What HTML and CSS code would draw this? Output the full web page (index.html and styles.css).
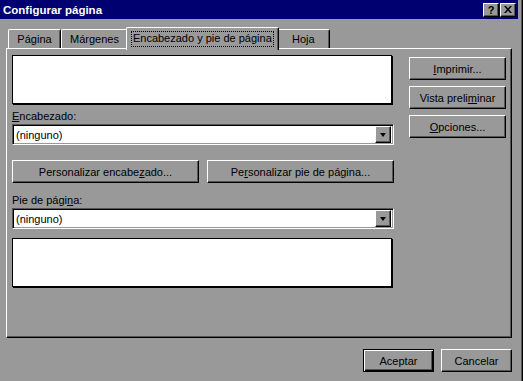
FILE: index.html
```html
<!DOCTYPE html>
<html lang="es">

<head>
    <meta charset="UTF-8">
    <title>Configurar página</title>
    <link rel="stylesheet" href="styles.css">
</head>

<body>
    <div class="window">
        <div class="titlebar">
            <span class="title">Configurar página</span>
            <div class="title-buttons">
                <span class="tbtn help">?</span>
                <span class="tbtn">
                    <svg width="8" height="7" viewBox="0 0 8 7">
                        <path d="M0 0h2l2 2.5l2-2.5h2l-3 3.5l3 3.5h-2l-2-2.5l-2 2.5h-2l3-3.5z" fill="#000"/>
                    </svg>
                </span>
            </div>
        </div>

        <div class="content">
            <div class="tabs">
                <div class="tab">Página</div>
                <div class="tab">Márgenes</div>
                <div class="tab active"><span class="focus">Encabezado y pie de página</span></div>
                <div class="tab">Hoja</div>
            </div>

            <div class="panel">
                <div class="left">
                    <div class="preview"></div>

                    <label class="field-label"><u>E</u>ncabezado:</label>
                    <div class="combo">
                        <span>(ninguno)</span>
                        <span class="drop"><span class="arrow"></span></span>
                    </div>

                    <div class="custom-row">
                        <button class="btn">Personalizar encabe<u>z</u>ado...</button>
                        <button class="btn">Pe<u>r</u>sonalizar pie de página...</button>
                    </div>

                    <label class="field-label footer-label">Pie de pági<u>n</u>a:</label>
                    <div class="combo">
                        <span>(ninguno)</span>
                        <span class="drop"><span class="arrow"></span></span>
                    </div>

                    <div class="preview footer-preview"></div>
                </div>

                <div class="right">
                    <button class="btn"><u>I</u>mprimir...</button>
                    <button class="btn">Vista preli<u>m</u>inar</button>
                    <button class="btn"><u>O</u>pciones...</button>
                </div>
            </div>

            <div class="actions">
                <button class="btn default">Aceptar</button>
                <button class="btn">Cancelar</button>
            </div>
        </div>
    </div>
</body>

</html>
```

FILE: styles.css
```css
body {
    margin: 0;
    font-family: "Liberation Sans", Arial, sans-serif;
    font-size: 11px;
    color: #000;
}

.window {
    width: 523px;
    height: 381px;
    background-color: #999;
    box-shadow: inset -1px 0 #000, inset -2px 0 #555;
    overflow: hidden;
}

/* title bar */
.titlebar {
    height: 19px;
    margin-right: 5px;
    padding: 0 2px 0 3px;
    background-color: #000070;
    display: flex;
    align-items: center;
    justify-content: space-between;
}

.title {
    color: #fff;
    font-weight: bold;
    font-size: 11.5px;
}

.title-buttons {
    display: flex;
    gap: 1px;
}

.tbtn {
    width: 16px;
    height: 14px;
    box-sizing: border-box;
    background-color: #999;
    border: 1px solid;
    border-color: #fff #000 #000 #fff;
    box-shadow: inset -1px -1px #555;
    display: flex;
    align-items: center;
    justify-content: center;
}

.help {
    font-weight: bold;
    font-size: 11px;
    line-height: 12px;
}

/* tabs */
.content {
    padding-left: 6px;
}

.tabs {
    display: flex;
    align-items: flex-end;
    height: 21px;
    margin-top: 8px;
    padding-left: 2px;
    position: relative;
    z-index: 1;
}

.tab {
    height: 19px;
    box-sizing: border-box;
    min-width: 53px;
    padding: 3px 8px 0;
    line-height: 13px;
    text-align: center;
    border-left: 1px solid #fff;
    border-top: 1px solid #fff;
    border-right: 1px solid #000;
    border-radius: 2px 2px 0 0;
    box-shadow: inset -1px 0 #555;
    background-color: #999;
}

.tab.active {
    height: 23px;
    margin: 0 -2px -2px;
    padding: 3px 4px 0;
    position: relative;
}

.focus {
    display: inline-block;
    border: 1px dotted #000;
    padding: 0 1px 1px;
}

/* panel */
.panel {
    width: 506px;
    height: 290px;
    box-sizing: border-box;
    border-top: 1px solid #fff;
    border-left: 1px solid #fff;
    border-right: 1px solid #000;
    border-bottom: 1px solid #000;
    box-shadow: inset -1px -1px #555;
    padding: 6px 0 0 5px;
    display: flex;
    gap: 15px;
}

.left {
    width: 382px;
}

.preview {
    width: 380px;
    height: 49px;
    box-sizing: border-box;
    background-color: #fff;
    border: 1px solid #000;
    box-shadow: 1px 1px 0 #000;
}

.footer-preview {
    margin-top: 9px;
}

.field-label {
    display: block;
    margin-top: 6px;
    margin-bottom: 1px;
    line-height: 13px;
}

.footer-label {
    margin-top: 11px;
}

.combo {
    width: 382px;
    height: 21px;
    box-sizing: border-box;
    background-color: #fff;
    border: 1px solid;
    border-color: #555 #fff #fff #555;
    box-shadow: inset 1px 1px #000, inset -1px -1px #999;
    padding: 0 2px 0 3px;
    display: flex;
    align-items: center;
    justify-content: space-between;
}

.drop {
    width: 16px;
    height: 17px;
    box-sizing: border-box;
    background-color: #999;
    border: 1px solid;
    border-color: #fff #000 #000 #fff;
    box-shadow: inset -1px -1px #555;
    display: flex;
    align-items: center;
    justify-content: center;
}

.arrow {
    width: 0;
    height: 0;
    border-left: 3.5px solid transparent;
    border-right: 3.5px solid transparent;
    border-top: 4px solid #000;
}

/* buttons */
.btn {
    height: 23px;
    box-sizing: border-box;
    padding: 0;
    font-family: inherit;
    font-size: 11px;
    color: #000;
    background-color: #999;
    border: 1px solid;
    border-color: #fff #000 #000 #fff;
    border-radius: 0;
    box-shadow: inset -1px -1px #555;
}

.custom-row {
    display: flex;
    gap: 8px;
    margin-top: 15px;
}

.custom-row .btn {
    width: 187px;
}

.right {
    display: flex;
    flex-direction: column;
    gap: 6px;
    padding-top: 2px;
}

.right .btn {
    width: 97px;
}

.actions {
    width: 506px;
    display: flex;
    justify-content: flex-end;
    gap: 7px;
    margin-top: 11px;
}

.actions .btn {
    width: 71px;
}

.btn.default {
    border-color: #000;
    box-shadow: inset 1px 1px #fff, inset -1px -1px #000, inset -2px -2px #555;
}
```
